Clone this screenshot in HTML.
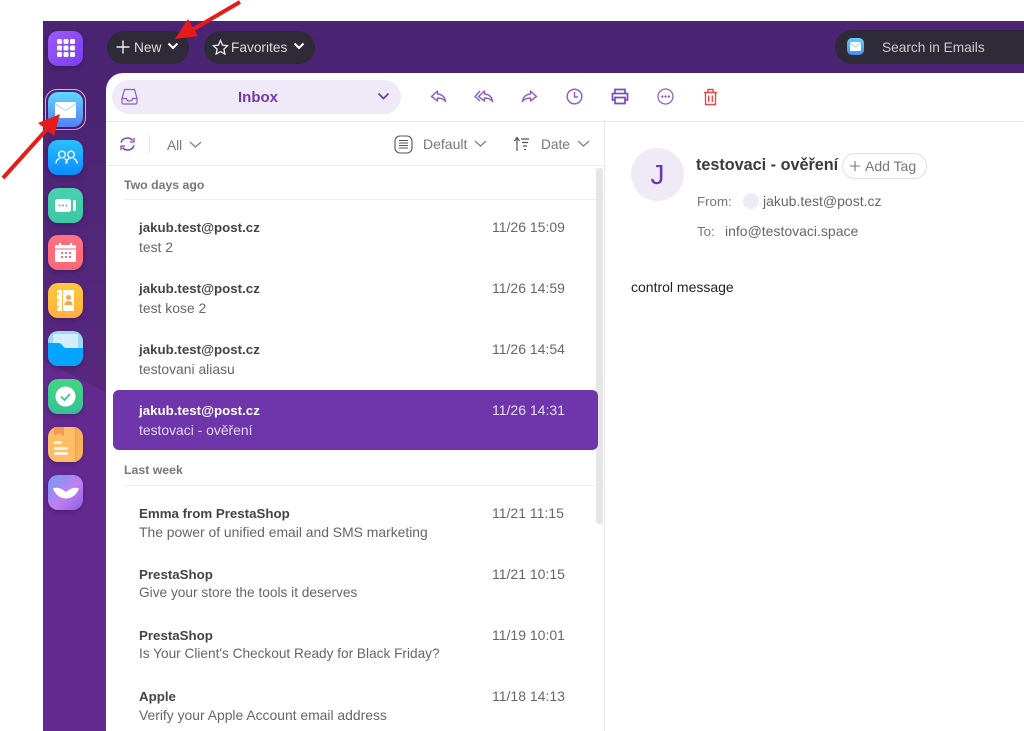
<!DOCTYPE html>
<html><head><meta charset="utf-8"><style>
html,body{margin:0;padding:0;background:#fff}
#p{position:relative;width:1024px;height:731px;overflow:hidden;background:#fff;font-family:"Liberation Sans",sans-serif;color:#555}
#p div,#p svg{position:absolute}
.t{white-space:nowrap;line-height:18px;margin-top:1px}
.ic{width:35px;height:35px;border-radius:10px;left:48px;box-shadow:0 2px 5px rgba(30,0,60,.3);overflow:hidden}
.f{font-weight:bold;font-size:13.3px;color:#444;left:139px}
.s{font-size:13.9px;color:#666;left:139px;margin-top:0}
.d{font-size:14px;color:#666;left:492px;margin-top:0}
.h{font-size:12.3px;font-weight:bold;color:#777;left:124px;margin-top:0}
</style></head><body><div id="p">
<div style="left:43px;top:21px;width:981px;height:710px;background:#4b2473"></div>
<svg style="left:43px;top:21px" width="64" height="710"><defs><linearGradient id="u" x1="0" y1="0" x2="0" y2="1"><stop offset="0" stop-color="#4b2473"/><stop offset="1" stop-color="#58287f"/></linearGradient></defs><polygon points="0,52 64,52 64,372 0,339" fill="url(#u)"/><polygon points="0,339 64,372 64,710 0,710" fill="#652a90"/></svg>
<div style="left:106px;top:73px;width:918px;height:658px;background:#fff;border-top-left-radius:17px"></div>

<!-- top bar -->
<div style="left:107px;top:31px;width:82px;height:33px;border-radius:17px;background:#2f2a38"></div>
<svg style="left:115px;top:39px" width="16" height="16" fill="none" stroke="#eee" stroke-width="1.4"><path d="M8 1.500v13M1.500 8h13"/></svg>
<div class="t" style="left:134px;top:38px;font-size:13.7px;color:#ddd">New</div>
<svg style="left:167px;top:42px" width="12" height="9" fill="none" stroke="#fff" stroke-width="2"><path d="M1.500 1.500 6 6l4.500-4.500"/></svg>
<div style="left:204px;top:31px;width:111px;height:33px;border-radius:17px;background:#2f2a38"></div>
<svg style="left:212px;top:39px" width="17" height="16" fill="none" stroke="#eee" stroke-width="1.300"><path d="M8.500 1.500l2.100 4.600 5 .6-3.700 3.400 1 5-4.400-2.500-4.400 2.500 1-5L1.400 6.700l5-.6z"/></svg>
<div class="t" style="left:231px;top:38px;font-size:13.7px;color:#ddd">Favorites</div>
<svg style="left:293px;top:42px" width="12" height="9" fill="none" stroke="#fff" stroke-width="2"><path d="M1.500 1.500 6 6l4.500-4.500"/></svg>
<div style="left:835px;top:30px;width:220px;height:34px;border-radius:17px;background:#2f2a38"></div>
<div style="left:847px;top:38px;width:17px;height:17px;border-radius:5px;background:linear-gradient(#62d0ff,#4b8cf5)"></div>
<svg style="left:850px;top:42px" width="11" height="9"><rect width="11" height="9" rx="1" fill="#fff"/><path d="M0 1l5.500 4L11 1" fill="none" stroke="#9cc8f5" stroke-width=".8"/></svg>
<div class="t" style="left:882px;top:38px;font-size:13.7px;color:#ccc">Search in Emails</div>

<!-- sidebar -->
<div class="ic" style="top:31px;background:linear-gradient(135deg,#9d5cf8,#7a3cf0)"></div>
<svg style="left:56px;top:39px" width="20" height="20" fill="#fff"><rect x="1" y="0" width="5" height="5" rx="1.500"/><rect x="7.500" y="0" width="5" height="5" rx="1.500"/><rect x="14" y="0" width="5" height="5" rx="1.500"/><rect x="1" y="6.500" width="5" height="5" rx="1.500"/><rect x="7.500" y="6.500" width="5" height="5" rx="1.500"/><rect x="14" y="6.500" width="5" height="5" rx="1.500"/><rect x="1" y="13" width="5" height="5" rx="1.500"/><rect x="7.500" y="13" width="5" height="5" rx="1.500"/><rect x="14" y="13" width="5" height="5" rx="1.500"/></svg>
<div style="left:45px;top:89px;width:39px;height:39px;border-radius:12px;border:1.500px solid #cdb9dc"></div>
<div class="ic" style="top:92px;background:linear-gradient(#5fd8ff,#5a7df0)"></div>
<svg style="left:55px;top:102px" width="21" height="17"><rect width="21" height="16" rx="1.500" fill="#fff"/><path d="M0 1.500l10.500 7 10.500-7" fill="none" stroke="#a9d4f7" stroke-width="1"/></svg>
<div class="ic" style="top:140px;background:linear-gradient(#2ac0ff,#0a8cff)"></div>
<svg style="left:55px;top:150px" width="23" height="15" fill="none" stroke="#fff" stroke-width="1.400"><circle cx="7" cy="4.500" r="3.300"/><circle cx="16" cy="4.500" r="3.300"/><path d="M1 13.500c0-3 1.800-4.500 3.500-5M9.500 8.500c1.500.5 2.500 2 2.500 5M11 13.500c0-3 1.800-4.500 3.500-5M18.500 8.500c2 .5 3.500 2 3.500 5"/></svg>
<div class="ic" style="top:188px;background:linear-gradient(#4bd0ae,#3cc8a4)"></div>
<svg style="left:55px;top:198px" width="22" height="15" fill="#fff"><rect y="1" width="16" height="13" rx="2.500"/><rect x="18" y="2" width="3" height="11" rx="1.500"/><circle cx="4.500" cy="7.500" r="1" fill="#3cc8a4"/><circle cx="8" cy="7.500" r="1" fill="#3cc8a4"/><circle cx="11.500" cy="7.500" r="1" fill="#3cc8a4"/></svg>
<div class="ic" style="top:235px;background:linear-gradient(#ff7282,#f76a78)"></div>
<svg style="left:55px;top:243px" width="21" height="20"><rect y="2" width="21" height="17" rx="1.500" fill="#fff"/><rect x="4" y="0" width="2" height="4" fill="#fff"/><rect x="15" y="0" width="2" height="4" fill="#fff"/><path d="M0 6h21" stroke="#f76a78"/><g fill="#f76a78"><rect x="6" y="9" width="2" height="2"/><rect x="10" y="9" width="2" height="2"/><rect x="14" y="9" width="2" height="2"/><rect x="6" y="13" width="2" height="2"/><rect x="10" y="13" width="2" height="2"/><rect x="14" y="13" width="2" height="2"/></g></svg>
<div class="ic" style="top:283px;background:linear-gradient(#ffc93c,#ffb040)"></div>
<svg style="left:56px;top:290px" width="19" height="22"><rect x="1" y="0" width="5" height="21" rx="1" fill="#fff"/><rect x="7" y="0" width="11" height="21" rx="1" fill="#fff"/><circle cx="12.500" cy="7.500" r="2.500" fill="#f9a63a"/><path d="M8.500 15c0-3 1.500-4 4-4s4 1 4 4z" fill="#f9a63a"/><g fill="#ffbe3c"><rect x="0" y="3" width="3" height="1.500"/><rect x="0" y="9.500" width="3" height="1.500"/><rect x="0" y="16" width="3" height="1.500"/></g></svg>
<div class="ic" style="top:331px;background:#9bd8fa"></div>
<svg style="left:48px;top:331px;border-radius:10px" width="35" height="35"><rect x="5" y="3" width="25" height="16" fill="#e6f4fd" opacity=".75"/><path d="M0 12h11c3 0 4 5 7 5h17v8a10 10 0 0 1-10 10H10A10 10 0 0 1 0 25z" fill="#05a4ff"/></svg>
<div class="ic" style="top:379px;background:linear-gradient(#42d682,#38c096)"></div>
<svg style="left:55px;top:386px" width="21" height="21"><circle cx="10.500" cy="10.500" r="10" fill="#fff"/><path d="M6 10.500l3.500 3.500 5.500-6" fill="none" stroke="#3cc78c" stroke-width="1.800"/></svg>
<div class="ic" style="top:427px;background:linear-gradient(90deg,#fdbe66 78%,#f7b35c 78%)"></div>
<svg style="left:48px;top:427px" width="35" height="35"><rect x="27" y="0" width="1.500" height="35" fill="#eda64f"/><path d="M6 0h10v9l-5-3-5 3z" fill="#f59a4e"/><g fill="#fff3dd"><rect x="6" y="14" width="8" height="3" rx="1.500"/><rect x="6" y="20" width="14" height="3" rx="1.500"/><rect x="6" y="25" width="14" height="3" rx="1.500"/></g></svg>
<div class="ic" style="top:475px;background:linear-gradient(135deg,#6f9cf2,#c07ff2 55%,#8a5fe0)"></div>
<svg style="left:53px;top:487px" width="26" height="12" fill="#fff"><path d="M0 1.500c5-2 9 .5 13 3.500 4-3 8-5.500 13-3.500C24 7 19 11.500 13 11.500S2 7 0 1.500z"/></svg>

<!-- toolbar -->
<div style="left:112px;top:80px;width:289px;height:34px;border-radius:17px;background:#f0eaf8"></div>
<svg style="left:121px;top:88px" width="17" height="18" fill="none" stroke="#8a5fc0" stroke-width="1.200"><path d="M3.500 1.500h10l2.500 9v4a1.500 1.500 0 0 1-1.500 1.500h-12A1.500 1.500 0 0 1 1 14.500v-4zM1 10.500h4.500c0 2 1.500 2.500 3 2.500s3-.5 3-2.500H16"/></svg>
<div class="t" style="left:238px;top:88px;font-size:15px;font-weight:bold;color:#6f3bab">Inbox</div>
<svg style="left:377px;top:92px" width="13" height="9" fill="none" stroke="#6f3bab" stroke-width="1.700"><path d="M1.500 1.500 6.500 6.500l5-5"/></svg>
<div style="left:106px;top:121px;width:918px;height:1px;background:#e8e8e8"></div>
<svg style="left:430px;top:88px" width="18" height="18" fill="none" stroke="#8e62c4" stroke-width="1.500" stroke-linejoin="round"><path d="M7.500 3 1.500 8.500 7.500 13V10c3.500 0 6 .8 8 3.500-.5-4-3-7-8-7.500z"/></svg>
<svg style="left:474px;top:88px" width="20" height="18" fill="none" stroke="#8e62c4" stroke-width="1.500" stroke-linejoin="round"><path d="M6 3 1 8.500 6 13M10.500 3 4.500 8.500 10.500 13V10c3.500 0 6 .8 8 3.500-.5-4-3-7-8-7.500z"/></svg>
<svg style="left:520px;top:88px" width="18" height="18" fill="none" stroke="#8e62c4" stroke-width="1.500" stroke-linejoin="round"><path d="M10.500 3l6 5.500-6 4.500V10c-3.500 0-6 .8-8 3.500.5-4 3-7 8-7.500z"/></svg>
<svg style="left:566px;top:88px" width="17" height="17" fill="none" stroke="#8e62c4" stroke-width="1.500"><circle cx="8.500" cy="8.500" r="7.300"/><path d="M8.500 4v5h3.500"/></svg>
<svg style="left:611px;top:88px" width="18" height="17" fill="none" stroke="#7a4cb8" stroke-width="1.700"><path d="M4 5V1.500h10V5M4 12H1.500V5.500h15V12H14M4 9.500h10v6H4z"/></svg>
<svg style="left:657px;top:88px" width="17" height="17" fill="none" stroke="#8e62c4" stroke-width="1.300"><circle cx="8.500" cy="8.500" r="7.500"/><g fill="#7a4cb8" stroke="none"><circle cx="5.300" cy="8.500" r="1.100"/><circle cx="8.500" cy="8.500" r="1.100"/><circle cx="11.700" cy="8.500" r="1.100"/></g></svg>
<svg style="left:703px;top:88px" width="15" height="18" fill="none" stroke="#e5484d" stroke-width="1.400"><path d="M1 4.500h13M5 4.500V1.500h5v3M2.500 4.500v12h10v-12M5.700 7.500v6.500M9.300 7.500v6.500"/></svg>

<!-- list header -->
<svg style="left:119px;top:136px" width="17" height="16" fill="none" stroke="#7d46be" stroke-width="1.600"><path d="M2 6.500C3 3.500 5.500 2 8.500 2c2 0 4 1 5 2.500M15 9.500c-1 3-3.500 4.500-6.500 4.500-2 0-4-1-5-2.500"/><path d="M15 2v4h-4M2 14v-4h4" stroke-width="1.300"/></svg>
<div style="left:149px;top:135px;width:1px;height:18px;background:#e5e5e5"></div>
<div class="t" style="left:167px;top:136px;font-size:13.700px;color:#777">All</div>
<svg style="left:189px;top:141px" width="13" height="8" fill="none" stroke="#888" stroke-width="1.500"><path d="M1 1 6.500 6 12 1"/></svg>
<svg style="left:394px;top:135px" width="19" height="19" fill="none" stroke="#555" stroke-width="1.100"><rect x="1" y="1" width="17" height="17" rx="5"/><path d="M5 5.500h9M5 8h9M5 10.500h9M5 13h9"/></svg>
<div class="t" style="left:423px;top:134px;font-size:14px;color:#777">Default</div>
<svg style="left:474px;top:140px" width="13" height="8" fill="none" stroke="#888" stroke-width="1.500"><path d="M1 1 6.500 6 12 1"/></svg>
<svg style="left:513px;top:136px" width="17" height="16" fill="none" stroke="#555" stroke-width="1.200"><path d="M4 15V2M1.500 5 4 1.500 6.500 5M8 3h8M9 6.500h6M10 10h4M11 13.500h2"/></svg>
<div class="t" style="left:541px;top:135px;font-size:13.700px;color:#777">Date</div>
<svg style="left:577px;top:140px" width="13" height="8" fill="none" stroke="#888" stroke-width="1.500"><path d="M1 1 6.500 6 12 1"/></svg>
<div style="left:106px;top:165px;width:498px;height:1px;background:#eee"></div>
<div style="left:604px;top:122px;width:1px;height:609px;background:#e8e8e8"></div>
<div style="left:124px;top:199px;width:480px;height:1px;background:#eee"></div>
<div style="left:124px;top:485px;width:480px;height:1px;background:#eee"></div>
<div style="left:596px;top:168px;width:7px;height:356px;border-radius:3px;background:#e6e6e6"></div>

<!-- list -->
<div class="t h" style="top:176px">Two days ago</div>
<div class="t f" style="top:218px">jakub.test@post.cz</div><div class="t s" style="top:238px">test 2</div><div class="t d" style="top:218px">11/26 15:09</div>
<div class="t f" style="top:279px">jakub.test@post.cz</div><div class="t s" style="top:299px">test kose 2</div><div class="t d" style="top:279px">11/26 14:59</div>
<div class="t f" style="top:340px">jakub.test@post.cz</div><div class="t s" style="top:360px">testovani aliasu</div><div class="t d" style="top:340px">11/26 14:54</div>
<div style="left:113px;top:390px;width:485px;height:60px;border-radius:6px;background:#6f35ab"></div>
<div class="t f" style="top:401px;color:#fff">jakub.test@post.cz</div><div class="t s" style="top:421px;color:#e4d8f0">testovaci - ověření</div><div class="t d" style="top:401px;color:#e8def2">11/26 14:31</div>
<div class="t h" style="top:461px">Last week</div>
<div class="t f" style="top:504px">Emma from PrestaShop</div><div class="t s" style="top:523px">The power of unified email and SMS marketing</div><div class="t d" style="top:504px">11/21 11:15</div>
<div class="t f" style="top:565px">PrestaShop</div><div class="t s" style="top:584px;font-size:13.7px">Give your store the tools it deserves</div><div class="t d" style="top:565px">11/21 10:15</div>
<div class="t f" style="top:626px">PrestaShop</div><div class="t s" style="top:645px;font-size:13.65px">Is Your Client's Checkout Ready for Black Friday?</div><div class="t d" style="top:626px">11/19 10:01</div>
<div class="t f" style="top:687px">Apple</div><div class="t s" style="top:706px">Verify your Apple Account email address</div><div class="t d" style="top:687px">11/18 14:13</div>

<!-- reading pane -->
<div style="left:631px;top:148px;width:53px;height:53px;border-radius:50%;background:#f0eaf8"></div>
<div class="t" style="left:631px;top:161px;width:53px;text-align:center;font-size:28px;line-height:26px;color:#6f35ab">J</div>
<div class="t" style="left:696px;top:155px;font-size:16.200px;font-weight:bold;color:#3a3a3a">testovaci - ověření</div>
<div style="left:842px;top:153px;width:83px;height:24px;border:1px solid #e0e0e0;border-radius:13px"></div>
<svg style="left:849px;top:160px" width="12" height="12" fill="none" stroke="#777" stroke-width="1.100"><path d="M6 1v10M1 6h10"/></svg>
<div class="t" style="left:865px;top:156px;font-size:14px;color:#777">Add Tag</div>
<div class="t" style="left:697px;top:192px;font-size:13.300px;color:#777">From:</div>
<div style="left:743px;top:193px;width:16px;height:16px;border-radius:50%;background:#f0eaf8"></div>
<div class="t" style="left:763px;top:191px;font-size:14px;color:#666">jakub.test@post.cz</div>
<div class="t" style="left:697px;top:222px;font-size:13.300px;color:#777">To:</div>
<div class="t" style="left:725px;top:221px;font-size:14px;color:#666">info@testovaci.space</div>
<div class="t" style="left:631px;top:277px;font-size:14px;color:#222">control message</div>

<!-- arrows -->
<svg style="left:0;top:0" width="260" height="190"><path d="M240 2 192 30" stroke="#e61c1c" stroke-width="4" fill="none"/><polygon points="175,39 188,19 198,36" fill="#e61c1c"/><path d="M3 178 48 128" stroke="#e61c1c" stroke-width="4" fill="none"/><polygon points="60,114 38,123 54,136" fill="#e61c1c"/></svg>
</div></body></html>
